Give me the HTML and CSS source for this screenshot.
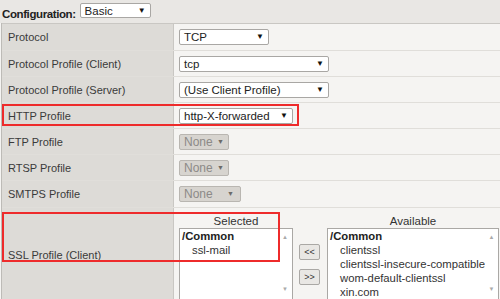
FILE: index.html
```html
<!DOCTYPE html>
<html>
<head>
<meta charset="utf-8">
<link rel="stylesheet" href="styles.css">
</head>
<body>
<div class="page">
  <div class="topbar">
    <span class="cfg-label">Configuration:</span>
    <span class="sel sel-basic"><span>Basic</span><span class="arrow">▼</span></span>
  </div>
  <div class="table">
    <div class="row first">
      <div class="lbl">Protocol</div>
      <div class="val"><span class="sel w90"><span>TCP</span><span class="arrow">▼</span></span></div>
    </div>
    <div class="row">
      <div class="lbl">Protocol Profile (Client)</div>
      <div class="val"><span class="sel w150"><span>tcp</span><span class="arrow">▼</span></span></div>
    </div>
    <div class="row">
      <div class="lbl">Protocol Profile (Server)</div>
      <div class="val"><span class="sel w150"><span>(Use Client Profile)</span><span class="arrow">▼</span></span></div>
    </div>
    <div class="row">
      <div class="lbl">HTTP Profile</div>
      <div class="val"><span class="sel w114"><span>http-X-forwarded</span><span class="arrow">▼</span></span></div>
    </div>
    <div class="row">
      <div class="lbl">FTP Profile</div>
      <div class="val"><span class="sel dis w50"><span>None</span><span class="arrow">▼</span></span></div>
    </div>
    <div class="row">
      <div class="lbl">RTSP Profile</div>
      <div class="val"><span class="sel dis w50"><span>None</span><span class="arrow">▼</span></span></div>
    </div>
    <div class="row tall1">
      <div class="lbl">SMTPS Profile</div>
      <div class="val"><span class="sel dis w62"><span>None</span><span class="arrow">▼</span></span></div>
    </div>
    <div class="row ssl">
      <div class="lbl">SSL Profile (Client)</div>
      <div class="val swap">
        <div class="col col-sel">
          <div class="hdr">Selected</div>
          <div class="listbox lb-sel">
            <div class="items">
              <div class="grp">/Common</div>
              <div class="it">ssl-mail</div>
            </div>
            <div class="sb"><span class="up">▲</span><span class="dn">▼</span></div>
          </div>
        </div>
        <div class="btns">
          <span class="btn">&lt;&lt;</span>
          <span class="btn">&gt;&gt;</span>
        </div>
        <div class="col col-av">
          <div class="hdr">Available</div>
          <div class="listbox lb-av">
            <div class="items">
              <div class="grp">/Common</div>
              <div class="it">clientssl</div>
              <div class="it">clientssl-insecure-compatible</div>
              <div class="it">wom-default-clientssl</div>
              <div class="it">xin.com</div>
            </div>
            <div class="sb"><span class="up">▲</span><span class="dn">▼</span></div>
          </div>
        </div>
      </div>
    </div>
  </div>
  <div class="mark mark-http"></div>
  <div class="mark mark-ssl"></div>
</div>
</body>
</html>
```
FILE: styles.css
```css
html, body {
  margin: 0;
  padding: 0;
}
body {
  width: 500px;
  height: 299px;
  overflow: hidden;
  background: #f5f4f2;
  font-family: "Liberation Sans", Arial, sans-serif;
  font-size: 11px;
  color: #363636;
}
.page {
  position: relative;
  width: 500px;
  height: 299px;
  overflow: hidden;
}
.topbar {
  height: 23px;
  background: #e9e7e4;
  display: flex;
  align-items: flex-start;
  box-sizing: border-box;
  padding-left: 2px;
}
.cfg-label {
  font-weight: bold;
  font-size: 11.5px;
  color: #222;
  margin-top: 8px;
  letter-spacing: -0.4px;
}
.sel {
  display: inline-flex;
  align-items: center;
  justify-content: space-between;
  box-sizing: border-box;
  height: 16px;
  background: #fff;
  border: 1px solid #a9a7a4;
  border-radius: 2px;
  padding: 0 4px 0 4px;
  font-size: 11.5px;
  color: #222;
  line-height: 14px;
}
.sel .arrow {
  font-size: 8px;
  color: #111;
}
.sel-basic {
  width: 71px;
  margin-left: 4px;
  margin-top: 3px;
  height: 15px;
}
.w90 { width: 90px; }
.w150 { width: 150px; }
.w114 { width: 114px; }
.w50 { width: 50px; }
.w62 { width: 62px; }
.sel.dis {
  background: #d7d4cf;
  border-color: #b9b6b1;
  color: #8c8a87;
  font-size: 12px;
}
.sel.dis .arrow {
  color: #6c6a67;
  font-size: 7px;
}
.w62 .arrow { margin-right: 2px; }
.table {
  border-left: 1px solid #bdbbb7;
  margin-left: 1px;
}
.row {
  display: grid;
  grid-template-columns: 172px 1fr;
  height: 26px;
  box-sizing: border-box;
  border-top: 1px solid #e0deda;
}
.row.first {
  height: 27px;
  border-top-color: #c9c7c3;
}
.row.tall1 { height: 27px; }
.lbl {
  background: #dddbd7;
  border-right: 1px solid #c9c7c3;
  display: flex;
  align-items: center;
  padding-left: 6px;
  font-size: 11px;
  color: #3a3a3a;
}
.val {
  background: #f5f4f2;
  display: flex;
  align-items: center;
  padding-left: 5px;
}
.row.ssl {
  height: 100px;
}
.row.ssl .lbl {
  align-items: flex-start;
  padding-top: 41px;
}
.val.swap {
  align-items: flex-start;
}
.col {
  display: flex;
  flex-direction: column;
}
.hdr {
  text-align: center;
  height: 20px;
  line-height: 13px;
  padding-top: 7px;
  box-sizing: border-box;
  color: #333;
  font-size: 11.5px;
}
.listbox {
  display: flex;
  background: #fff;
  border: 1px solid #aaa8a5;
  height: 80px;
  box-sizing: border-box;
}
.lb-sel { width: 114px; }
.lb-av { width: 172px; }
.items {
  flex: 1;
  padding: 0 0 0 2px;
  line-height: 14px;
  color: #333;
  white-space: nowrap;
  font-size: 11.3px;
}
.grp {
  font-weight: bold;
  color: #222;
}
.it {
  padding-left: 10px;
}
.sb {
  width: 14px;
  background: #fff;
  display: flex;
  flex-direction: column;
  align-items: center;
  font-size: 6px;
  color: #aaa;
  padding-top: 5px;
}
.sb .dn {
  margin-top: 46px;
}
.btns {
  display: flex;
  flex-direction: column;
  gap: 9px;
  margin-left: 6px;
  margin-right: 7px;
  padding-top: 36px;
}
.btn {
  display: flex;
  align-items: center;
  justify-content: center;
  width: 21px;
  height: 16px;
  box-sizing: border-box;
  background: #e9e7e4;
  border: 1px solid #aaa8a5;
  border-radius: 2px;
  font-size: 9px;
  color: #333;
}
.mark {
  position: absolute;
  border: 2px solid #ee2b2b;
  box-sizing: border-box;
}
.mark-http {
  left: 2px;
  top: 104px;
  width: 297px;
  height: 22px;
}
.mark-ssl {
  left: 2px;
  top: 212px;
  width: 278px;
  height: 50px;
}
```
